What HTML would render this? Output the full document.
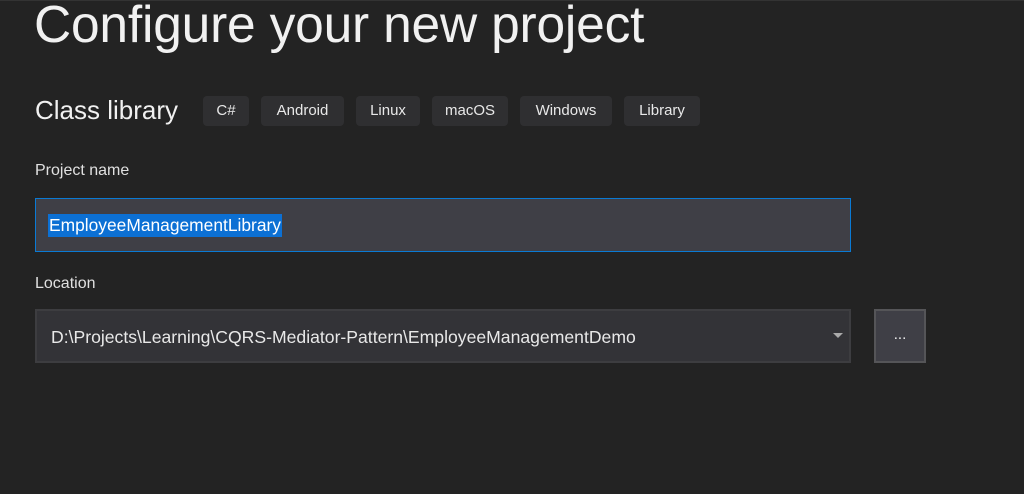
<!DOCTYPE html>
<html><head><meta charset="utf-8"><style>
html,body{margin:0;padding:0;}
body{width:1024px;height:494px;background:#232323;position:relative;overflow:hidden;font-family:"Liberation Sans",sans-serif;color:#f1f1f1;border-top:1px solid #333;box-sizing:border-box;}
.abs{position:absolute;white-space:nowrap;}
.title{left:34px;top:-7px;font-size:51.5px;letter-spacing:-0.2px;}
.sub{left:35px;top:94px;font-size:26px;}
.chip{position:absolute;top:95px;height:30px;background:#2f2f31;border-radius:4px;font-size:15px;line-height:30px;text-align:center;color:#e8e8e8;}
.lbl{left:35px;font-size:16px;color:#e0e0e0;}
.box{position:absolute;box-sizing:border-box;}
</style></head><body>
<div class="abs title">Configure your new project</div>
<div class="abs sub">Class library</div>
<div class="chip" style="left:203px;width:46px">C#</div>
<div class="chip" style="left:261px;width:83px">Android</div>
<div class="chip" style="left:356px;width:64px">Linux</div>
<div class="chip" style="left:432px;width:76px">macOS</div>
<div class="chip" style="left:520px;width:92px">Windows</div>
<div class="chip" style="left:624px;width:76px">Library</div>
<div class="abs lbl" style="top:161px">Project name</div>
<div class="box" style="left:35px;top:197px;width:816px;height:54px;background:#3f3f46;border:1px solid #0a7ad4;">
  <span class="abs" style="left:12px;top:15px;background:#0c70d4;color:#fff;font-size:17.4px;line-height:23px;padding:0 1px;">EmployeeManagementLibrary</span>
</div>
<div class="abs lbl" style="top:274px">Location</div>
<div class="box" style="left:35px;top:308px;width:816px;height:54px;background:#333337;border:2px solid #3d3d40;">
  <span class="abs" style="left:14px;top:16px;font-size:17.6px;color:#e8e8e8;">D:\Projects\Learning\CQRS-Mediator-Pattern\EmployeeManagementDemo</span>
  <svg class="abs" style="left:796px;top:22px" width="10" height="6"><path d="M0 0H10L5 5Z" fill="#aaa"/></svg>
</div>
<div class="box" style="left:874px;top:308px;width:52px;height:54px;background:#3f3f46;border:2px solid #555558;text-align:center;line-height:48px;font-size:15px;">...</div>
</body></html>
